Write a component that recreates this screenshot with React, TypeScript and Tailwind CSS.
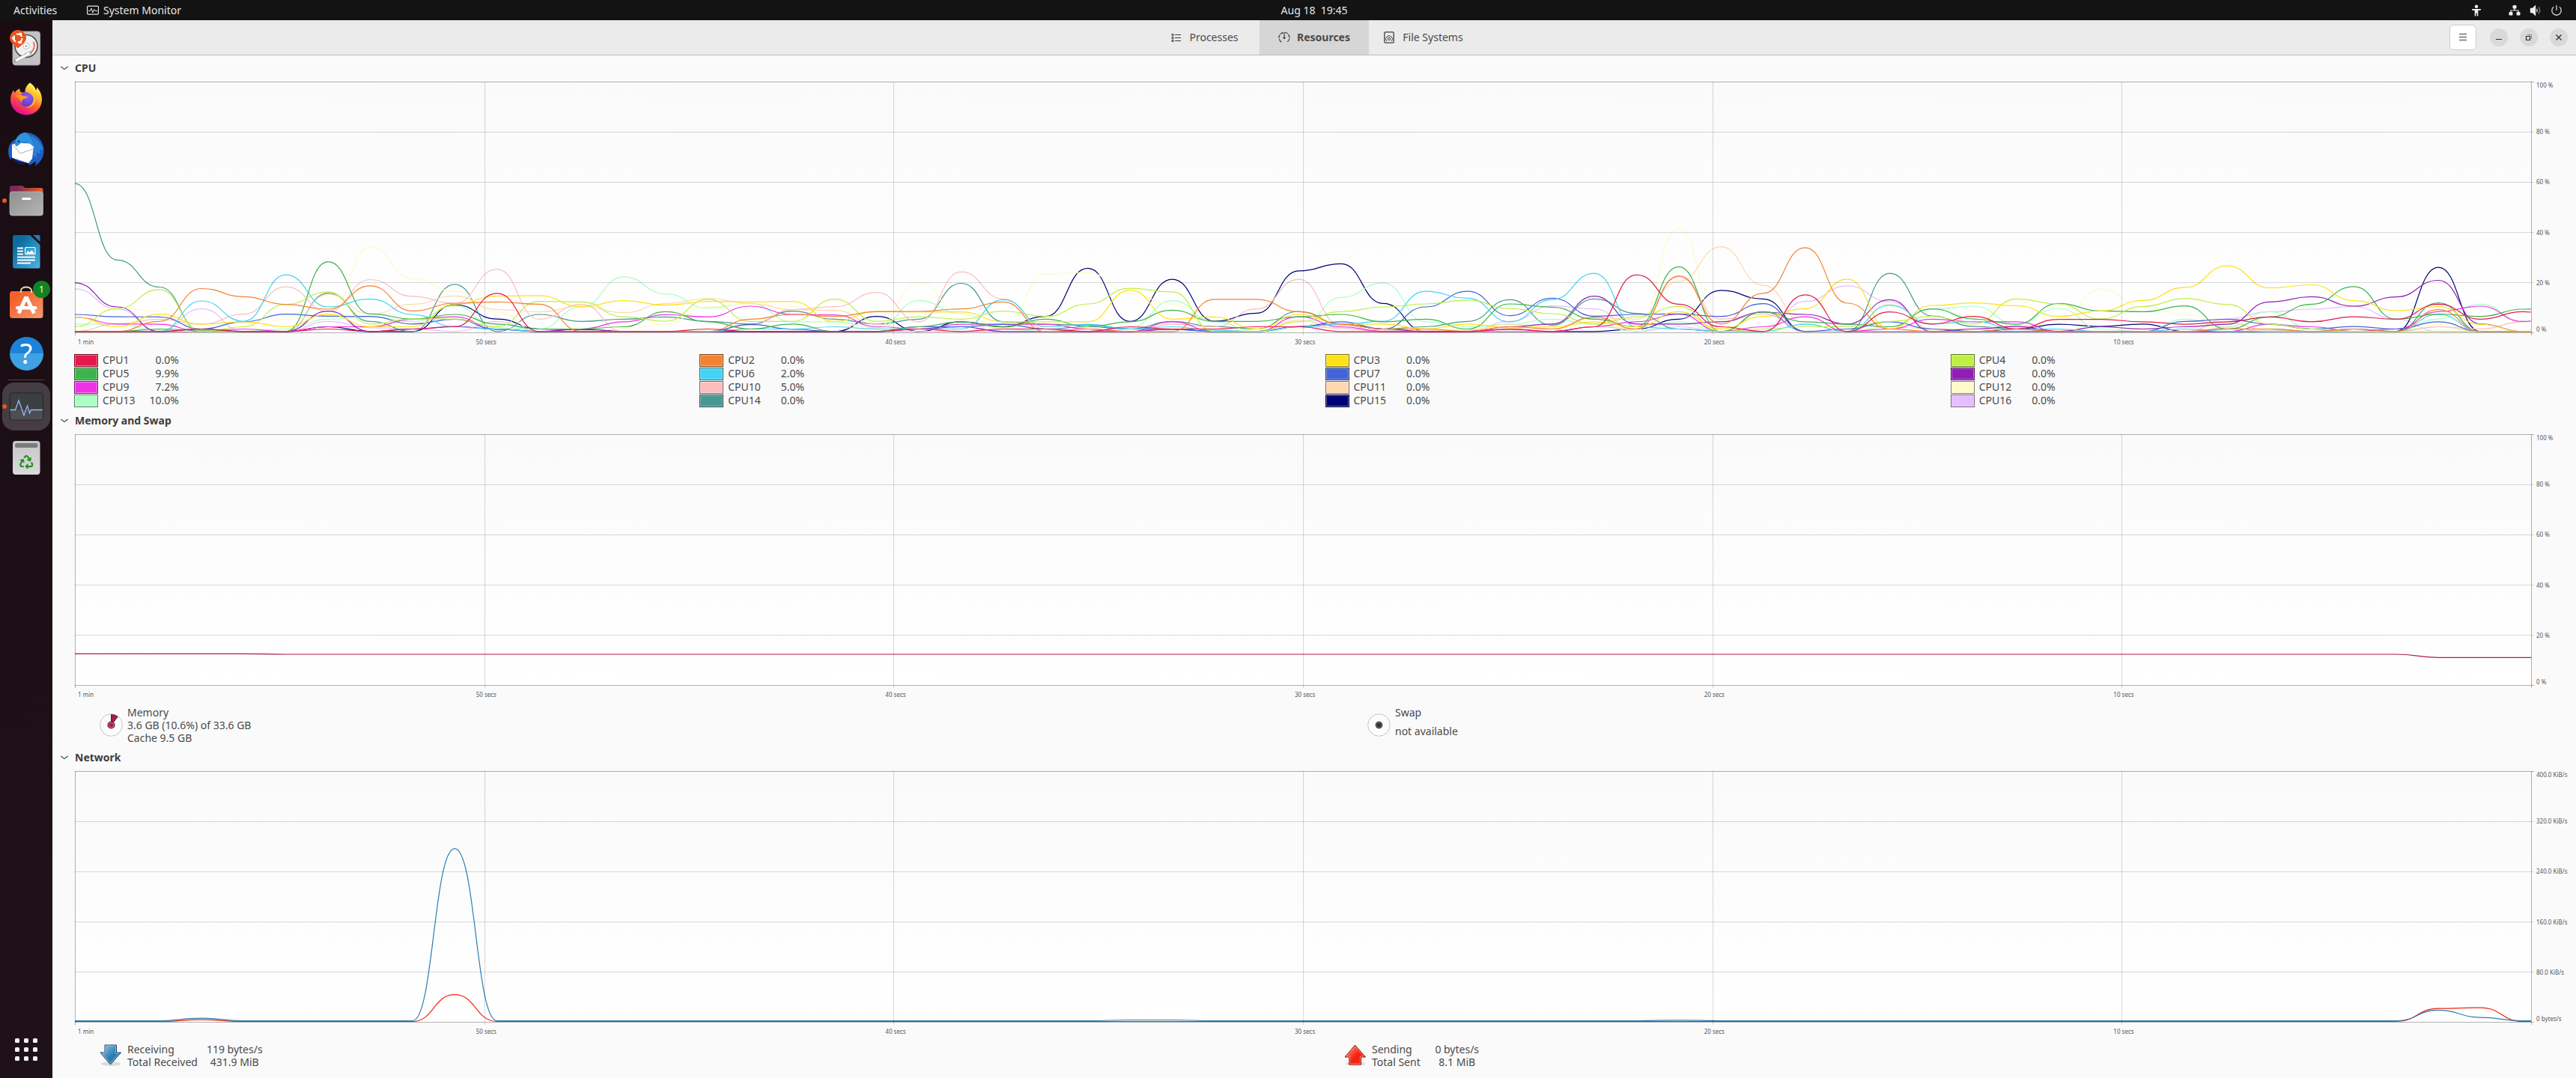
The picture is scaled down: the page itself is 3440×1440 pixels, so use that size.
import React from "react"
import { FaRecycle } from "react-icons/fa"

type Series = { name: string; color: string; usage?: string; values: number[] }

const STEP = 56.36
const PLOT_W = 3280
const PLOT_H = 336

// One sample per second, oldest first, in percent.
const cpus: Series[] = [
  { name: "CPU1", color: "#e6194b", usage: "0.0%", values: [0.5, 0.5, 0.5, 1.5, 0.5, 0.5, 1.5, 0.5, 1.5, 2.4, 15.7, 0.5, 0.5, 0.5, 0.5, 1.5, 0.5, 0.5, 0.5, 0.5, 1.5, 0.5, 1.5, 1.5, 0.5, 2.4, 1.5, 1.5, 2.4, 2.4, 0.5, 0.5, 0.5, 0.5, 1.5, 0.5, 2.4, 23.1, 11.4, 2.4, 0.5, 15.1, 0.5, 8.3, 3.5, 6.5, 1.5, 5.3, 5.3, 4.4, 3.4, 4.4, 6.3, 4.4, 6.4, 5.4, 11.4, 5.4, 8.4, 6] },
  { name: "CPU2", color: "#f58231", usage: "0.0%", values: [0.5, 0.5, 4.5, 17.6, 14.4, 11.3, 9.4, 18.7, 8.7, 11.8, 12.3, 11.4, 0.5, 0.5, 0.5, 0.5, 5.4, 7.3, 6.5, 8.4, 8.5, 9.5, 12.3, 0.5, 1.5, 0.5, 0.5, 13.3, 13.3, 8.4, 3.5, 1.5, 1.5, 0.5, 2.4, 1.5, 6.2, 1.5, 22.5, 3.5, 15.7, 33.9, 11.8, 1.5, 0.5, 0.5, 1.5, 0.5, 0.5, 0.5, 0.5, 1.5, 1.5, 0.5, 1.5, 0.5, 9.2, 0.5, 0.5, 0.5] },
  { name: "CPU3", color: "#ffe119", usage: "0.0%", values: [6.2, 2.4, 7.4, 3.4, 4.4, 2.4, 7.4, 2.4, 2.4, 11.4, 14.7, 14.8, 10.4, 12.8, 11, 12.5, 12.3, 12.5, 4.5, 8.6, 8.3, 8.3, 4.4, 4.4, 4.4, 17, 5.4, 6.3, 1.5, 7.3, 3.4, 3.5, 1.5, 3.5, 2, 2.4, 4.4, 2.4, 8.4, 1.5, 6.5, 9.6, 21.4, 1.5, 10.9, 11.9, 10.8, 6.5, 8.7, 12.9, 18.1, 26.7, 17.9, 19.1, 12.8, 8.8, 10.4, 3.4, 0.5, 0.5] },
  { name: "CPU4", color: "#bfef45", usage: "0.0%", values: [2.4, 9.6, 17.2, 0.5, 2.4, 11.3, 16.3, 3.5, 5.5, 5.5, 2.4, 12.5, 12.3, 6.4, 4.6, 13.3, 4.5, 4.5, 13.4, 4.5, 6.4, 5.4, 8.6, 6.5, 11.5, 17.7, 16.3, 0.5, 0.5, 4.4, 8.4, 10.3, 11.5, 13, 9.6, 7.6, 3.5, 6.3, 10.5, 0.5, 1.5, 2.4, 2.4, 4.5, 6.5, 3.5, 13.5, 11.5, 5.5, 10.5, 13.6, 11.3, 3.5, 1.5, 0.5, 0.5, 0.5, 0.5, 0.5, 0.5] },
  { name: "CPU5", color: "#3cb44b", usage: "9.9%", values: [0.5, 0.5, 1.5, 1, 0.5, 0.5, 28.3, 7.5, 5.5, 7.3, 3.5, 1.5, 1.5, 2.4, 8.4, 4.4, 1.5, 3.5, 0.5, 0.5, 2.4, 4.4, 2.3, 5.4, 2.4, 4.4, 9, 4.5, 4.5, 6.4, 7.3, 4.4, 5.4, 1.5, 11.5, 10.2, 5.4, 2.4, 26.3, 0.5, 8.3, 4.4, 3.4, 2.4, 9.5, 5.5, 3.4, 11.7, 8.7, 8.4, 10.7, 1.5, 6.3, 11.4, 18.4, 5.4, 7.4, 6.5, 9.4, 9.9] },
  { name: "CPU6", color: "#42d4f4", usage: "2.0%", values: [0.5, 0.5, 0.5, 12.7, 4.6, 23.1, 10.3, 13.5, 7.3, 2.4, 1.5, 0.5, 0.5, 0.5, 0.5, 0.5, 1.5, 1.5, 2.4, 1.5, 1.5, 1.5, 13.2, 2.4, 3.4, 1.5, 2.4, 1, 0.5, 2.4, 3.4, 4.6, 16.5, 13.8, 4.4, 13.2, 23.7, 2.4, 1.5, 0.5, 0.5, 3.4, 0.5, 11, 3.5, 4.5, 1.5, 1.5, 0.5, 0.5, 1.5, 0.5, 0.5, 0.5, 0.5, 0.5, 7.3, 0.5, 0.5, 0.5] },
  { name: "CPU7", color: "#4363d8", usage: "0.0%", values: [7.3, 6.4, 6.3, 1.5, 4.4, 7.4, 6.6, 6.5, 3.5, 5.4, 1.3, 0.5, 0.5, 0.5, 0.5, 0.5, 3.3, 1.4, 0.5, 0.5, 2.4, 2.4, 3.4, 1.5, 2.4, 1.5, 1.3, 0.5, 0.5, 2.4, 4.4, 1.5, 10.3, 16.5, 6.8, 13.8, 6.6, 7.3, 7.5, 6.5, 11.6, 0.5, 1.5, 4.4, 1.5, 0.5, 0.5, 0.5, 0.5, 0.5, 4.5, 5.4, 3.4, 1.5, 2.5, 1.5, 4.4, 0.5, 0.5, 0.5] },
  { name: "CPU8", color: "#911eb4", usage: "0.0%", values: [19.9, 10.3, 0.5, 1.5, 0.5, 0.5, 8.6, 0.5, 1.5, 2.5, 1.5, 0.5, 1.5, 0.5, 0.5, 0.5, 0.5, 0.5, 0.5, 0.5, 1.5, 2.4, 0.5, 0.5, 0.5, 0.5, 1.5, 0.5, 0.5, 2.5, 3.5, 1.5, 0.5, 0.5, 2.4, 3.5, 14.6, 3.5, 3.5, 4.4, 8.2, 7.3, 3.5, 13.2, 0.5, 1.5, 2.5, 0.5, 2.4, 1.5, 2.4, 3.4, 12.3, 14.4, 10.6, 14.3, 20.9, 3.5, 0.5, 0.5] },
  { name: "CPU9", color: "#f032e6", usage: "7.2%", values: [6.2, 3.5, 3.4, 0.5, 1.5, 0.5, 2.4, 2.4, 5.3, 6.4, 1.4, 0.5, 1.5, 4.4, 7.2, 6.3, 10.6, 7.3, 7.1, 2.4, 1.5, 3.4, 3.4, 3.4, 1.5, 0.5, 4.4, 0.5, 0.5, 6.4, 2.4, 0.5, 0.5, 0.5, 1.3, 0.5, 2.4, 4.4, 7.4, 0.5, 2.4, 6.4, 0.5, 1.5, 5.4, 4.4, 4.4, 0.5, 0.5, 0.5, 0.5, 0.5, 3.4, 2.4, 0.5, 1.5, 8.4, 10.6, 4.5, 7] },
  { name: "CPU10", color: "#fabebe", usage: "5.0%", values: [0.5, 3.5, 5.4, 3.4, 7.4, 18.3, 8.5, 21.2, 14.5, 11.7, 25.3, 5.4, 11.3, 0.5, 0.5, 0.5, 3, 9.2, 10.4, 16.1, 4.4, 24.3, 13.5, 1.5, 0.5, 0.5, 3.4, 2.4, 9.5, 21.3, 3, 0.5, 0.5, 0.5, 0.5, 0.5, 2.4, 1.5, 22.8, 5.4, 7.5, 0.5, 0.5, 0.5, 0.5, 0.5, 0.5, 0.5, 0.5, 0.5, 0.5, 2, 0.5, 0.5, 0.5, 0.5, 2.4, 1.5, 4.4, 5] },
  { name: "CPU11", color: "#ffd8b1", usage: "0.0%", values: [0.5, 0.5, 0.5, 0.5, 0.5, 0.5, 15.3, 7.4, 11.4, 14.7, 9.3, 8.3, 10.6, 8, 11.6, 13.7, 11.6, 9.2, 9, 3.4, 0.5, 0.5, 3.4, 1.5, 0.5, 0.5, 0.5, 0.5, 0.5, 5, 1.5, 1, 1, 1, 3.5, 1.5, 6, 5.4, 20.5, 34.3, 19, 3.5, 0.5, 2.4, 1.5, 1.5, 3, 1, 0.5, 0.5, 0.5, 4, 1, 0.5, 0.5, 0.5, 2.4, 0.5, 0.5, 0.5] },
  { name: "CPU12", color: "#fffac8", usage: "0.0%", values: [0.5, 10.1, 8.4, 1, 0.5, 5.4, 7, 34.3, 21.5, 16.5, 8.3, 0.5, 0.5, 1.5, 3.5, 10.5, 11.5, 10.5, 3.4, 2.4, 20.1, 7.5, 1.5, 23.5, 24, 15.5, 11.5, 1.5, 1, 1.5, 9.3, 4, 1.5, 1.5, 1.5, 1.5, 4, 1, 41.6, 0.5, 0.5, 0.5, 0.5, 11.4, 2, 7.4, 12.6, 4.4, 17.4, 10.4, 7.4, 1.5, 0.5, 0.5, 0.5, 0.5, 3.4, 0.5, 0.5, 0.5] },
  { name: "CPU13", color: "#aaffc3", usage: "10.0%", values: [3.4, 3.4, 1, 0.5, 0.5, 1.5, 5.4, 6.4, 4.4, 10.7, 2, 1.5, 10.3, 22.3, 15.5, 9.8, 11.7, 4.4, 4.4, 2, 12.8, 7.6, 1.5, 0.5, 0.5, 2, 12.8, 4.4, 0.5, 1.5, 14.1, 19.9, 4.4, 2.4, 3.4, 5.4, 3.4, 0.5, 4.4, 0.5, 0.5, 0.5, 0.5, 2.4, 9.5, 10.6, 3.4, 9.7, 1.5, 0.5, 5.4, 2.4, 8.4, 1.5, 0.5, 0.5, 5.5, 11.4, 4.5, 10] },
  { name: "CPU14", color: "#469990", usage: "0.0%", values: [59.5, 29, 18.2, 0.5, 0.5, 0.5, 15.8, 4.5, 0.5, 19.3, 0.5, 7.3, 4.5, 5.4, 6.3, 4.5, 3.5, 8.6, 5.4, 3.5, 5.4, 19.7, 4.4, 3.4, 3, 1.5, 4.5, 2.5, 1.5, 8.5, 3.5, 1.5, 2.4, 4.5, 13.2, 3, 13.5, 7.7, 1.5, 0.5, 8.4, 0.5, 0.5, 23.7, 6.7, 2.5, 1.5, 0.5, 0.5, 0.5, 0.5, 1.5, 1.5, 0.5, 1.5, 0.5, 11.9, 0.5, 0.5, 0.5] },
  { name: "CPU15", color: "#000075", usage: "0.0%", values: [0.5, 0.5, 0.5, 0.5, 0.5, 0.5, 2.4, 0.5, 0.5, 11.2, 5.5, 1.5, 1.3, 0.5, 0.5, 0.5, 0.5, 0.5, 0.5, 6.5, 0.5, 4.4, 2.4, 6.5, 25.7, 4.5, 21.3, 4.6, 7.8, 24.7, 27.5, 11.7, 0.5, 0.5, 0.5, 0.5, 0.5, 1.5, 5.4, 16.9, 13.5, 0.5, 0.5, 0.5, 0.5, 0.5, 1.5, 3.4, 2.5, 3.5, 0.5, 0.5, 0.5, 0.5, 0.5, 0.5, 26.1, 0.5, 0.5, 0.5] },
  { name: "CPU16", color: "#e6beff", usage: "0.0%", values: [17.5, 9.5, 0.5, 9.6, 0.5, 0.5, 4.5, 2, 1.5, 0.5, 4.5, 0.5, 0.5, 0.5, 0.5, 0.5, 0.5, 0.5, 0.5, 0.5, 0.5, 0.5, 0.5, 0.5, 0.5, 0.5, 1.5, 0.5, 0.5, 2.4, 2, 0.5, 0.5, 0.5, 4.5, 10.7, 9.5, 0.5, 2.4, 0.5, 0.5, 12.5, 18.7, 12.4, 1.5, 0.5, 0.5, 0.5, 0.5, 0.5, 0.5, 5.5, 8.4, 9.4, 10.5, 5.4, 0.5, 0.5, 0.5, 0.5] },
]

const memory: Series[] = [
  {
    name: "Memory",
    color: "#ab1852",
    values: Array.from({ length: 60 }, (_, i) => (i < 5 ? 12.6 : i < 56 ? 12.4 : 11.1)),
  },
]

// Percent of the 400 KiB/s scale
const receiving: Record<number, number> = { 3: 1.6, 9: 69.2, 25: 0.9, 26: 0.9, 38: 0.8, 56: 4.8, 57: 1.9 }
const sending: Record<number, number> = { 3: 1, 9: 11, 56: 5.5, 57: 5.8 }

const network: Series[] = [
  { name: "Receiving", color: "#2d7db3", values: Array.from({ length: 60 }, (_, i) => receiving[i] ?? 0.6) },
  { name: "Sending", color: "#f3230f", values: Array.from({ length: 60 }, (_, i) => sending[i] ?? 0.3) },
]

const percentScale = ["100 %", "80 %", "60 %", "40 %", "20 %", "0 %"]
const rateScale = ["400.0 KiB/s", "320.0 KiB/s", "240.0 KiB/s", "160.0 KiB/s", "80.0 KiB/s", "0 bytes/s"]
const timeScale = ["1 min", "50 secs", "40 secs", "30 secs", "20 secs", "10 secs"]

function linePath(values: number[]) {
  const y = (v: number) => (335.5 - v * 3.35).toFixed(1)
  return values.reduce((d, v, i) => {
    const x = i * STEP
    if (i === 0) return `M0 ${y(v)}`
    const mid = (x - STEP / 2).toFixed(1)
    return `${d}C${mid} ${y(values[i - 1])} ${mid} ${y(v)} ${x.toFixed(1)} ${y(v)}`
  }, "")
}

function Chart({ label, series, scale }: { label: string; series: Series[]; scale: string[] }) {
  const lines = [0, 1, 2, 3, 4, 5]
  return (
    <div className="flex min-h-[160px] flex-1 flex-col pl-[30px] text-[8px] leading-[10px] text-[#55585a]">
      <div className="flex min-h-0 flex-1">
        <div className="relative min-w-0 flex-1 bg-linear-to-b from-[#fafafa] to-white">
          <svg
            role="img"
            aria-label={label}
            viewBox={`0 0 ${PLOT_W} ${PLOT_H}`}
            preserveAspectRatio="none"
            className="absolute inset-0 h-full w-full overflow-visible"
          >
            <svg width={PLOT_W} height={PLOT_H} overflow="hidden" fill="none" strokeWidth="1.2">
              {[...series].reverse().map((s) => (
                <path key={s.name} d={linePath(s.values)} stroke={s.color} vectorEffect="non-scaling-stroke" />
              ))}
            </svg>
            <g fill="none" stroke="#000" strokeWidth="1">
              {lines.map((i) => (
                <path
                  key={`h${i}`}
                  d={`M0 ${i * 67 + 0.5}H${PLOT_W + 4}`}
                  strokeOpacity={i === 0 || i === 5 ? 0.3 : 0.15}
                />
              ))}
              {[0, 1, 2, 3, 4, 5, 6].map((i) => (
                <path
                  key={`v${i}`}
                  d={`M${Math.round((i * PLOT_W) / 6) + 0.5} 0V${PLOT_H + 3}`}
                  strokeOpacity={i === 0 || i === 6 ? 0.3 : 0.15}
                />
              ))}
            </g>
          </svg>
        </div>
        <div className="flex w-[60px] flex-col pl-[7px]">
          {scale.slice(0, 5).map((text, i) => (
            <div key={text} className="flex flex-1 flex-col justify-between">
              <span className={i === 0 ? "" : "-mt-[5px]"}>{text}</span>
              {i === 4 && <span>{scale[5]}</span>}
            </div>
          ))}
        </div>
      </div>
      <div className="flex h-[27px] pt-[7px] pr-[60px]">
        {timeScale.map((text, i) => (
          <span key={text} className="flex-1">
            <span className={i === 0 ? "ml-1" : "-ml-[11px]"}>{text}</span>
          </span>
        ))}
      </div>
    </div>
  )
}

function SectionTitle({ children }: { children: React.ReactNode }) {
  return (
    <h2 className="mt-[6px] mb-2 flex h-[21px] shrink-0 items-center">
      <button type="button" aria-expanded="true" className="flex items-center gap-[9px] pl-[11px] font-bold text-[#3d3d3d]">
        <svg width="10" height="10" viewBox="0 0 10 10" fill="none" stroke="#3d3d3d" strokeWidth="1.2">
          <path d="M0.5 3L5 6.6L9.5 3" />
        </svg>
        {children}
      </button>
    </h2>
  )
}

function CpuLegend() {
  return (
    <ul className="grid shrink-0 grid-cols-4 pb-px pl-[29px]">
      {cpus.map((cpu) => (
        <li key={cpu.name} className="flex h-[18px] items-center">
          <button
            type="button"
            aria-label={`${cpu.name} color`}
            className="mr-[6px] h-[17px] w-8 border border-black/50 shadow-[inset_0_0_0_1px_rgba(255,255,255,0.4)]"
            style={{ backgroundColor: cpu.color }}
          />
          <span className="w-[50px]">{cpu.name}</span>
          <span className="w-[52px] text-right">{cpu.usage}</span>
        </li>
      ))}
    </ul>
  )
}

function MemoryLegend() {
  return (
    <div className="grid shrink-0 grid-cols-2 gap-4 pb-px leading-[17px]">
      <div className="flex items-center gap-[6px] pl-[63px]">
        <svg width="31" height="31" viewBox="0 0 31 31">
          <circle cx="15.5" cy="15.5" r="14.8" fill="#fcfcfc" stroke="#c4c4c4" />
          <path d="M15.5 15.5V1.5A14 14 0 0 1 24.2 4.5Z" fill="#ab1852" stroke="#4a2434" />
          <circle cx="15.5" cy="15.5" r="4.5" fill="#ab1852" stroke="#4a2434" strokeWidth="1.2" />
          <circle cx="15.5" cy="15.5" r="3.4" fill="none" stroke="#d58ba8" strokeWidth="0.8" />
        </svg>
        <div>
          <p>Memory</p>
          <p>3.6 GB (10.6%) of 33.6 GB</p>
          <p>Cache 9.5 GB</p>
        </div>
      </div>
      <div className="flex items-center gap-[6px] pl-[63px]">
        <svg width="31" height="31" viewBox="0 0 31 31">
          <circle cx="15.5" cy="15.5" r="14.8" fill="#fcfcfc" stroke="#c4c4c4" />
          <circle cx="15.5" cy="15.5" r="4.8" fill="#2e2e2e" />
          <circle cx="15.5" cy="15.5" r="3.4" fill="none" stroke="#8a8a8a" strokeWidth="0.8" />
        </svg>
        <div className="flex flex-col gap-2 self-start">
          <p>Swap</p>
          <p>not available</p>
        </div>
      </div>
    </div>
  )
}

function NetArrow({ up }: { up?: boolean }) {
  return (
    <svg width="30" height="30" viewBox="0 0 30 30">
      <defs>
        <linearGradient id={up ? "net-up" : "net-down"} x1="0" y1="0" x2="1" y2="1">
          <stop offset="0.1" stopColor={up ? "#ff8a78" : "#8dbfe0"} />
          <stop offset="0.55" stopColor={up ? "#f3230f" : "#2d7db3"} />
        </linearGradient>
      </defs>
      <ellipse cx="15" cy="26" rx="13" ry="3" fill="#000" opacity="0.12" />
      {up ? (
        <>
          <path d="M14.5 1L28.5 17H22.5V27H6.8V17H1Z" fill="url(#net-up)" stroke="#8c1208" />
          <path d="M14.5 2.6L26.3 16H21.5V26H7.8V16H3.2Z" fill="none" stroke="#ff9c8e" strokeOpacity="0.8" />
        </>
      ) : (
        <>
          <path d="M7 1H22.5V11H28.5L14.5 27L1 11H7Z" fill="url(#net-down)" stroke="#17415f" />
          <path d="M8 2H21.5V12H26.3L14.5 25.4L3.2 12H8Z" fill="none" stroke="#a6d0ec" strokeOpacity="0.7" />
        </>
      )}
    </svg>
  )
}

function NetworkLegend() {
  const rows = [
    { title: "Receiving", rate: "119 bytes/s", total: "Total Received", amount: "431.9 MiB", up: false },
    { title: "Sending", rate: "0 bytes/s", total: "Total Sent", amount: "8.1 MiB", up: true },
  ]
  return (
    <div className="grid shrink-0 grid-cols-2 pb-[13px] pl-[30px] pr-4 leading-[17px]">
      {rows.map((row) => (
        <div key={row.title} className="flex items-center gap-[7px] pl-[33px]">
          <NetArrow up={row.up} />
          <dl className="grid grid-cols-[auto_auto] gap-x-3">
            <dt>{row.title}</dt>
            <dd className="min-w-[74px] text-center">{row.rate}</dd>
            <dt>{row.total}</dt>
            <dd className="min-w-[74px] text-center">{row.amount}</dd>
          </dl>
        </div>
      ))}
    </div>
  )
}

function TopBar() {
  return (
    <header className="grid h-[27px] shrink-0 grid-cols-[70px_1fr_auto_1fr] items-center bg-[#131313] text-[#e6e6e6]">
      <div className="col-span-2 flex items-center pl-[18px]">
        <button type="button" className="w-[98px] text-left">Activities</button>
        <button type="button" className="flex items-center gap-[6px]">
          <svg width="16" height="13" viewBox="0 0 16 13" fill="none" stroke="#e6e6e6">
            <rect x="0.6" y="1.1" width="14.8" height="11" rx="1.2" strokeWidth="1.2" />
            <path d="M2 7.5H4.5L6 4L8 10L9.8 5.5L11 7.5H14" />
          </svg>
          System Monitor
        </button>
      </div>
      <button type="button" className="whitespace-pre">{"Aug 18  19:45"}</button>
      <div className="flex items-center justify-end pr-[18px]">
        <svg width="14" height="16" viewBox="0 0 14 16" fill="#f0f0f0" className="mr-9">
          <circle cx="7" cy="2.8" r="2.2" />
          <path d="M1 6H13V7.5L9.3 8V15.5H7.7V11.5H6.3V15.5H4.7V8L1 7.5Z" />
        </svg>
        <svg width="16" height="16" viewBox="0 0 16 16" fill="#f0f0f0" className="mr-3">
          <rect x="5.5" y="1" width="5" height="4.5" rx="1" />
          <rect x="0.5" y="10" width="5" height="4.5" rx="1" />
          <rect x="10.5" y="10" width="5" height="4.5" rx="1" />
          <path d="M8 5V8M3 10.5V8H13V10.5" fill="none" stroke="#f0f0f0" strokeWidth="1.2" />
        </svg>
        <svg width="16" height="16" viewBox="0 0 16 16" fill="none" stroke="#f0f0f0" strokeWidth="1.3" className="mr-3">
          <path d="M1.5 5.5H4L7.5 2V14L4 10.5H1.5Z" fill="#f0f0f0" />
          <path d="M9.5 5.8Q11 8 9.5 10.2" />
          <path d="M11.8 3.5Q15.5 8 11.8 12.5" opacity="0.5" />
        </svg>
        <svg width="16" height="16" viewBox="0 0 16 16" fill="none" stroke="#d6d6d6" strokeWidth="1.3">
          <path d="M4 3.3A6.2 6.2 0 1 0 12 3.3M8 1V8" />
        </svg>
      </div>
    </header>
  )
}

function HeaderBar() {
  const tab = "flex h-full w-[146px] items-center justify-center"
  const round = "flex size-6 items-center justify-center rounded-full bg-[#d9d9d9]"
  return (
    <div className="grid h-[47px] shrink-0 grid-cols-[1fr_auto_1fr] items-center border-b border-[#bdbdbd] bg-[#ebebeb]">
      <nav className="col-start-2 flex h-[46px]" role="tablist">
        <button type="button" role="tab" aria-selected="false" className={`${tab} gap-[11px]`}>
          <svg width="13" height="13" viewBox="0 0 13 13" fill="none" stroke="#3d3d3d">
            <path d="M1 1.5H3V3.5H1ZM1 5.5H3V7.5H1ZM1 9.5H3V11.5H1ZM5 2.5H13M5 6.5H13M5 10.5H13" />
          </svg>
          Processes
        </button>
        <button type="button" role="tab" aria-selected="true" className={`${tab} gap-[9px] bg-[#d6d6d6] font-bold`}>
          <svg width="16" height="16" viewBox="0 0 16 16" fill="none" stroke="#3d3d3d" strokeWidth="1.2">
            <path d="M4.3 14.2A7 7 0 1 1 11.7 14.2" strokeDasharray="5 1" />
            <path d="M8 2V7" />
            <circle cx="8" cy="8.5" r="1.5" fill="#3d3d3d" stroke="none" />
          </svg>
          Resources
        </button>
        <button type="button" role="tab" aria-selected="false" className={`${tab} gap-[11px]`}>
          <svg width="14" height="16" viewBox="0 0 14 16" fill="none" stroke="#3d3d3d">
            <rect x="0.8" y="0.8" width="12.4" height="14.4" rx="1.5" strokeWidth="1.3" />
            <path d="M3.8 13A4.3 4.3 0 1 1 10.2 13" />
            <circle cx="7" cy="10" r="1.6" />
          </svg>
          File Systems
        </button>
      </nav>
      <div className="flex items-center justify-end gap-4 pr-[11px]">
        <button type="button" aria-label="Menu" className="mr-[2px] flex h-[34px] w-9 items-center justify-center rounded-md border border-[#cdcdcd] bg-white">
          <svg width="10" height="10" viewBox="0 0 10 10" stroke="#3d3d3d">
            <path d="M0 0.5H10M0 4.5H10M0 8.5H10" />
          </svg>
        </button>
        <button type="button" aria-label="Minimize" className={round}>
          <svg width="10" height="10" viewBox="0 0 10 10" stroke="#2d2d2d">
            <path d="M1 7.5H9" />
          </svg>
        </button>
        <button type="button" aria-label="Restore" className={round}>
          <svg width="10" height="10" viewBox="0 0 10 10" fill="none" stroke="#2d2d2d">
            <path d="M1.5 3.5H6.5V8.5H1.5Z" strokeWidth="1.2" />
            <path d="M3 1.5H8.5V7" opacity="0.5" />
          </svg>
        </button>
        <button type="button" aria-label="Close" className={round}>
          <svg width="10" height="10" viewBox="0 0 10 10" stroke="#2d2d2d" strokeWidth="1.3">
            <path d="M1.5 1.5L8.5 8.5M8.5 1.5L1.5 8.5" />
          </svg>
        </button>
      </div>
    </div>
  )
}

function DiskIcon() {
  return (
    <svg width="48" height="48" viewBox="0 0 48 48">
      <rect x="6" y="2" width="36.5" height="45" rx="3.5" fill="#c3c3c3" stroke="#a2a2a2" />
      <circle cx="24" cy="21.5" r="15" fill="#f1f1f1" stroke="#4d4d4d" strokeWidth="1.6" />
      <path d="M33.5 16A11 11 0 0 1 22 32" fill="none" stroke="#e9765a" strokeWidth="2" />
      <circle cx="24" cy="21.5" r="4" fill="#fff" stroke="#c4c4c4" />
      <circle cx="24" cy="21.5" r="1.5" fill="#b5b5b5" />
      <path d="M10 41L29 31" stroke="#8a8a8a" strokeWidth="4.5" strokeLinecap="round" />
      <path d="M11 40.5L28 31.5" stroke="#fff" strokeWidth="3.5" strokeLinecap="round" />
      <path d="M13 24.5C7 20 2 16 2 11A11 11 0 0 1 24 11C24 16 18 20 13 24.5Z" fill="#e95420" />
      <circle cx="13" cy="11" r="5.6" fill="none" stroke="#fff" strokeWidth="2" strokeDasharray="9 2.7" />
      <circle cx="6.8" cy="11" r="2" fill="#fff" />
      <circle cx="16.3" cy="5.5" r="2" fill="#fff" />
      <circle cx="16.3" cy="16.5" r="2" fill="#fff" />
    </svg>
  )
}

function FirefoxIcon() {
  return (
    <svg width="48" height="48" viewBox="0 0 48 48">
      <defs>
        <linearGradient id="ff-body" x1="0.8" y1="0" x2="0.25" y2="1">
          <stop offset="0.1" stopColor="#fff44f" />
          <stop offset="0.35" stopColor="#ffb02e" />
          <stop offset="0.6" stopColor="#ff5a36" />
          <stop offset="0.9" stopColor="#e8138a" />
        </linearGradient>
        <radialGradient id="ff-globe" cx="0.6" cy="0.3" r="0.8">
          <stop offset="0" stopColor="#9059ff" />
          <stop offset="1" stopColor="#5b3ab5" />
        </radialGradient>
      </defs>
      <path d="M29 2.5C33.5 5 36 9 37 12.5C38 12 38.2 10 38 8.5C42 12 45 18.5 45 24.5C45 36.5 36 45.5 24.5 45.5C12.5 45.5 3 36.5 3 25C3 19.5 4.5 15.5 7.5 12.5C7.8 14 8.5 15.5 9 16C10 13 12.5 11.5 15.5 10.5C15 12.5 16 14.5 17.5 15.5H22.5C22 9.5 25.5 5 29 2.5Z" fill="url(#ff-body)" />
      <circle cx="24.5" cy="24.5" r="9.8" fill="url(#ff-globe)" />
      <path d="M9 20C13 18 18 18.5 20 20C22 20.5 24.5 20.5 26 21C25 23.5 22 24 20 24.5C17.5 26 18 28 19 30C15 28 15.5 24 14 22.5C12 22 10 21 9 20Z" fill="#ff9a1f" />
      <path d="M24 14.5C31 12.5 37.5 18 36 26.5C34.5 33.5 28.5 36 24 35.5C32 33.5 34.5 27 33.5 22.5C32 18 28 16.5 24 14.5Z" fill="#ffc328" opacity="0.9" />
    </svg>
  )
}

function ThunderbirdIcon() {
  return (
    <svg width="48" height="48" viewBox="0 0 48 48">
      <path d="M10 10C13 3.5 19 0.5 24 1C37 1.5 47.5 12 47.5 25C47.5 35 42 42 35 46C37 43 37.5 41 36.5 39.5L30 44L9 43C3 39 0 33 0 26C0 19 4 12.5 10 10Z" fill="#1f5fc0" />
      <path d="M4 34C10 39 18 42 27 42L27 46L22 48L6 48C5 44 3 39 4 34Z" fill="#190d13" />
      <path d="M4 34C10 39 18 41 27 41L20 44C13 45 7 41 4 34Z" fill="#1b1648" />
      <path d="M5 17L12 15L29 15.5L34 19L32 36L27 42L5 34.5Z" fill="#fff" />
      <path d="M6 17L16 29L33 23" fill="none" stroke="#b0b0b0" />
      <path d="M9 16C10 7 16 2 23 1C31 6 34 12 33 20C29 14 22 13 17 15L12.5 19C10 20 9 18 9 16Z" fill="#2f93dc" />
      <path d="M30 5C38 9 45 16 46 25L42 23L43 30L38 27L38 35L33 31C35 22 34 12 30 5Z" fill="#2c7fd6" />
      <circle cx="14" cy="13" r="1.3" fill="#10244d" />
    </svg>
  )
}

function FilesIcon() {
  return (
    <svg width="48" height="48" viewBox="0 0 48 48">
      <defs>
        <linearGradient id="files-back" x1="0" x2="1">
          <stop offset="0.2" stopColor="#7a2a55" />
          <stop offset="1" stopColor="#ea5a26" />
        </linearGradient>
        <linearGradient id="files-front" x1="0" y1="0" x2="1" y2="1">
          <stop offset="0" stopColor="#8f8f8f" />
          <stop offset="1" stopColor="#b5b5b5" />
        </linearGradient>
      </defs>
      <path d="M2 16V6.5A2.5 2.5 0 0 1 4.5 4H19L22.5 7H44A2.5 2.5 0 0 1 46.5 9.5V16Z" fill="url(#files-back)" />
      <rect x="2" y="12" width="44.5" height="32" rx="3.5" fill="url(#files-front)" stroke="#c2c2c2" strokeWidth="0.6" />
      <rect x="18" y="20" width="12.5" height="3" rx="1.5" fill="#fff" />
    </svg>
  )
}

function WriterIcon() {
  return (
    <svg width="48" height="48" viewBox="0 0 48 48">
      <defs>
        <linearGradient id="writer-page" x1="0" y1="0" x2="1" y2="1">
          <stop offset="0.2" stopColor="#0b6a9f" />
          <stop offset="1" stopColor="#4cb4e2" />
        </linearGradient>
      </defs>
      <path d="M9 2H29L42.5 15V44A2.5 2.5 0 0 1 40 46.5H9A3 3 0 0 1 6 43.5V5A3 3 0 0 1 9 2Z" fill="url(#writer-page)" />
      <path d="M33 2H41A1.5 1.5 0 0 1 42.5 3.5V11Z" fill="#1f7fb4" />
      <path d="M12 19.5H20M12 23.5H20M12 27.5H20M12 31.5H36M12 35.5H36M12 39.5H30" stroke="#fff" strokeWidth="1.9" />
      <rect x="22.5" y="18.5" width="13.5" height="9.5" rx="1" fill="#3aa2d6" stroke="#fff" strokeWidth="1.2" />
      <path d="M23.5 27L26.5 23L28.5 25L31.5 22L35 27Z" fill="#fff" />
    </svg>
  )
}

function StoreIcon() {
  return (
    <svg width="48" height="48" viewBox="0 0 48 48">
      <defs>
        <linearGradient id="store-bag" x1="0" y1="0" x2="1" y2="1">
          <stop offset="0.2" stopColor="#f2622a" />
          <stop offset="1" stopColor="#f79a70" />
        </linearGradient>
      </defs>
      <rect x="2" y="9" width="44.5" height="36" rx="3.5" fill="url(#store-bag)" />
      <path d="M17 11V8A7 4.5 0 0 1 31 8V11" fill="none" stroke="#f6dcae" strokeWidth="1.8" />
      <path d="M24 16.5L14 38.5M24 16.5L34.5 38.5" fill="none" stroke="#fff" strokeWidth="5" />
      <rect x="10" y="29" width="28.5" height="4.5" rx="2.2" fill="#fff" />
    </svg>
  )
}

function HelpIcon() {
  return (
    <span className="flex size-[45px] items-center justify-center rounded-full bg-linear-to-b from-[#1d83d6] from-50% to-[#3fa0e4] to-50% pb-[2px] text-[38px] leading-none text-white">
      ?
    </span>
  )
}

function MonitorIcon() {
  return (
    <svg width="48" height="48" viewBox="0 0 48 48">
      <rect x="2" y="6" width="44.5" height="36" rx="3.5" fill="#3c3f41" stroke="#222" />
      <path d="M3 28H46V38.5A3 3 0 0 1 43 41.5H6A3 3 0 0 1 3 38.5Z" fill="#4b4f53" />
      <path d="M2.5 28.5H9.5L14 16L21 36L25.5 23L28.5 33L30.5 28.5H46" fill="none" stroke="#9db4f0" strokeWidth="1.3" />
    </svg>
  )
}

function TrashIcon() {
  return (
    <svg width="48" height="48" viewBox="0 0 48 48">
      <defs>
        <linearGradient id="trash-body" x1="0" y1="0" x2="0" y2="1">
          <stop offset="0" stopColor="#c6c6c6" />
          <stop offset="1" stopColor="#dadada" />
        </linearGradient>
      </defs>
      <rect x="6" y="2" width="36.5" height="45" rx="4" fill="url(#trash-body)" />
      <rect x="9" y="5" width="30.5" height="6" rx="2.5" fill="#7b7b7b" />
      <FaRecycle x="15" y="21" size={18.5} color="#27921f" />
    </svg>
  )
}

function Dock() {
  const apps = [
    { name: "Install Ubuntu", icon: <DiskIcon /> },
    { name: "Firefox", icon: <FirefoxIcon /> },
    { name: "Thunderbird", icon: <ThunderbirdIcon /> },
    { name: "Files", icon: <FilesIcon />, running: true },
    { name: "LibreOffice Writer", icon: <WriterIcon /> },
    { name: "Ubuntu Software", icon: <StoreIcon />, badge: "1" },
    { name: "Help", icon: <HelpIcon /> },
  ]
  const item = "relative flex size-16 items-center justify-center rounded-2xl"
  const dot = "absolute left-0 top-[29px] size-[6px] rounded-full bg-[#e95420]"
  return (
    <aside className="flex w-[70px] shrink-0 flex-col items-center bg-linear-to-b from-[#190d13] to-[#1f1119] pt-[5px] pb-[14px]">
      <div className="flex flex-col gap-1">
        {apps.map((app) => (
          <button key={app.name} type="button" aria-label={app.name} className={item}>
            {app.icon}
            {app.running && <span className={dot} />}
            {app.badge && (
              <span className="absolute right-0 top-[3px] flex size-[23px] items-center justify-center rounded-full bg-[#0e8420] text-[12px] text-white">
                {app.badge}
              </span>
            )}
          </button>
        ))}
      </div>
      <div className="my-[3px] h-px w-12 bg-[#4c4347]" />
      <button type="button" aria-label="System Monitor" className={`${item} bg-[#463d42]`}>
        <MonitorIcon />
        <span className={dot} />
      </button>
      <button type="button" aria-label="Trash" className={`${item} mt-1`}>
        <TrashIcon />
      </button>
      <button type="button" aria-label="Show Applications" className="mt-auto flex size-12 items-center justify-center">
        <svg width="30" height="30" viewBox="0 0 30 30" fill="#f2f2f2">
          {[0, 12, 24].map((y) =>
            [0, 12, 24].map((x) => <rect key={`${x}-${y}`} x={x} y={y} width="6" height="6" rx="1.5" />)
          )}
        </svg>
      </button>
    </aside>
  )
}

export default function App() {
  return (
    <div className="flex min-h-screen flex-col bg-[#fafafa] font-['Noto_Sans','Open_Sans',sans-serif] text-sm leading-[18px] text-[#4a4a4a]">
      <TopBar />
      <div className="flex flex-1">
        <Dock />
        <div className="flex min-w-0 flex-1 flex-col">
          <HeaderBar />
          <main className="flex flex-1 flex-col">
            <SectionTitle>CPU</SectionTitle>
            <Chart label="CPU history" series={cpus} scale={percentScale} />
            <CpuLegend />
            <SectionTitle>Memory and Swap</SectionTitle>
            <Chart label="Memory and swap history" series={memory} scale={percentScale} />
            <MemoryLegend />
            <SectionTitle>Network</SectionTitle>
            <Chart label="Network history" series={network} scale={rateScale} />
            <NetworkLegend />
          </main>
        </div>
      </div>
    </div>
  )
}
